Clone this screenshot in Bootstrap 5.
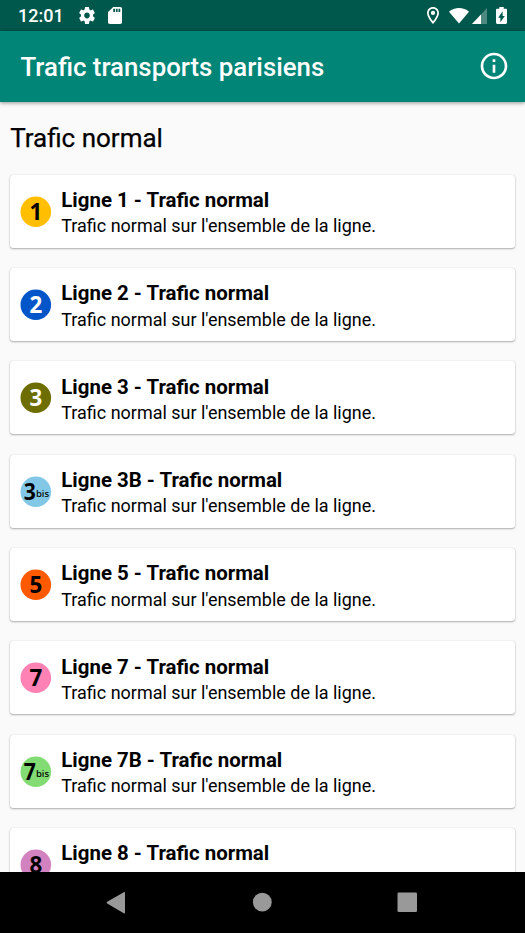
<!DOCTYPE html>
<html lang="fr">
<head>
<meta charset="utf-8">
<meta name="viewport" content="width=device-width, initial-scale=1">
<title>Trafic transports parisiens</title>
<link href="https://cdn.jsdelivr.net/npm/bootstrap@5.3.0/dist/css/bootstrap.min.css" rel="stylesheet">
<style>
body { font-family: Roboto, sans-serif; background: #fafafa; color: #000; }
.screen { height: 933px; }
.status-bar { height: 30.5px; background: #00574b; font-size: 18px; font-weight: 500; color: #fff; padding: 1px 18px 0; }
.status-bar svg, .app-bar svg, .nav-keys svg { display: block; flex: none; }
.clock { width: 60.5px; }
.gear { margin-right: 13px; }
.wifi { margin-left: 10px; }
.signal { margin-left: 3px; }
.battery { margin-left: 9px; }
.app-bar { height: 71.5px; background: #008577; box-shadow: 0 1px 4px rgba(0,0,0,.42); padding: 0 15px 0 20.5px; z-index: 1; }
.app-title { font-size: 25.8px; font-weight: 500; line-height: 30px; color: #fff; padding-top: 1.5px; }
.content { padding: 0 10px; }
.section-title { font-size: 26px; font-weight: 400; line-height: 30px; margin: 20.5px 0 22.1px .2px; -webkit-text-stroke: .25px #000; }
.lines { gap: 20.33px; }
.line-card { height: 73px; border: 0; border-radius: 3px; box-shadow: 0 1px 2px rgba(0,0,0,.3), 0 0 1px rgba(0,0,0,.2); padding: 0 10px; }
.line-text { margin-left: 10.3px; padding-top: 4px; }
.line-name { font-size: 20.45px; font-weight: 700; line-height: 26px; }
.line-info { font-size: 17.97px; line-height: 26px; padding-top: .15px; margin-bottom: -.15px; }
.line-logo { width: 31px; height: 31px; flex: none; overflow: visible; }
.line-logo text { font-family: "Noto Sans", sans-serif; font-weight: 700; text-anchor: middle; }
.line-logo .bis { font-weight: 500; }
.nav-keys { height: 61px; background: #000; }
</style>
</head>
<body>
<div class="screen d-flex flex-column overflow-hidden">
  <div class="status-bar d-flex align-items-center flex-shrink-0">
    <span class="clock">12:01</span>
    <svg class="gear" width="16" height="17" viewBox="2 2 20 20" preserveAspectRatio="none" fill="#fff"><path d="M19.43 12.98c.04-.32.07-.64.07-.98s-.03-.66-.07-.98l2.11-1.65c.19-.15.24-.42.12-.64l-2-3.46c-.12-.22-.39-.3-.61-.22l-2.49 1c-.52-.4-1.08-.73-1.69-.98l-.38-2.65C14.46 2.18 14.25 2 14 2h-4c-.25 0-.46.18-.49.42l-.38 2.65c-.61.25-1.17.59-1.69.98l-2.49-1c-.23-.09-.49 0-.61.22l-2 3.46c-.13.22-.07.49.12.64l2.11 1.65c-.04.32-.07.65-.07.98s.03.66.07.98l-2.11 1.65c-.19.15-.24.42-.12.64l2 3.46c.12.22.39.3.61.22l2.49-1c.52.4 1.08.73 1.69.98l.38 2.65c.03.24.24.42.49.42h4c.25 0 .46-.18.49-.42l.38-2.65c.61-.25 1.17-.59 1.69-.98l2.49 1c.23.09.49 0 .61-.22l2-3.46c.12-.22.07-.49-.12-.64l-2.11-1.65zM12 15.500c-1.930 0-3.500-1.570-3.500-3.500s1.570-3.500 3.500-3.500 3.500 1.570 3.500 3.500-1.570 3.500-3.500 3.500z"/></svg>
    <svg width="14" height="17" viewBox="4 2 16 20" preserveAspectRatio="none" fill="#fff"><path d="M18 2h-8L4.020 8 4 20c0 1.100.900 2 2 2h12c1.100 0 2-.900 2-2V4c0-1.100-.900-2-2-2zm-6 6h-2V4h2v4zm3 0h-2V4h2v4zm3 0h-2V4h2v4z"/></svg>
    <svg class="ms-auto" width="12" height="17" viewBox="5 2 14 20" preserveAspectRatio="none" fill="#fff"><path d="M12 2C8.130 2 5 5.130 5 9c0 5.250 7 13 7 13s7-7.750 7-13c0-3.870-3.130-7-7-7zM7 9c0-2.760 2.240-5 5-5s5 2.240 5 5c0 2.880-2.880 7.190-5 9.880C9.920 16.210 7 11.850 7 9z"/><circle cx="12" cy="9" r="2.500"/></svg>
    <svg class="wifi" width="20" height="16" viewBox="0 0 20 16" fill="#fff"><path d="M10 15.600 0 3.700C5.500-1.200 14.500-1.200 20 3.700Z"/></svg>
    <svg class="signal" width="15" height="16" viewBox="0 0 15 16" fill="#fff"><path opacity=".3" d="M15 0V16H0Z"/><path d="M9 6.400V16H0Z"/></svg>
    <svg class="battery" width="11" height="17" viewBox="7 2 10 20" preserveAspectRatio="none" fill="#fff"><path d="M15.670 4H14V2h-4v2H8.330C7.600 4 7 4.600 7 5.330v15.330C7 21.400 7.600 22 8.330 22h7.330c.740 0 1.340-.600 1.340-1.330V5.330C17 4.600 16.400 4 15.670 4zM11 20v-5.500H9L13 7v5.500h2L11 20z"/></svg>
  </div>
  <header class="app-bar d-flex align-items-center justify-content-between flex-shrink-0 position-relative">
    <h1 class="app-title m-0">Trafic transports parisiens</h1>
    <svg width="32" height="32" viewBox="0 0 24 24" fill="#fff" role="img" aria-label="Informations"><path d="M11 7h2v2h-2zm0 4h2v6h-2zm1-9C6.480 2 2 6.480 2 12s4.480 10 10 10 10-4.480 10-10S17.520 2 12 2zm0 18c-4.410 0-8-3.590-8-8s3.590-8 8-8 8 3.590 8 8-3.590 8-8 8z"/></svg>
  </header>
  <main class="content flex-grow-1 overflow-hidden">
    <h2 class="section-title">Trafic normal</h2>
    <div class="lines d-flex flex-column" id="lines"></div>
  </main>
  <nav class="nav-keys d-flex flex-shrink-0 align-items-center">
    <svg class="w-100 h-100" viewBox="0 0 525 61" fill="#999"><path d="M107.200 29.800 123.800 20.200Q125 19.500 125 21V40.500Q125 42 123.800 41.200L107.200 31.400Q106 30.600 107.200 29.800Z"/><circle cx="262.300" cy="30.200" r="9.400"/><rect x="397.500" y="20.500" width="19.500" height="19.500" rx="1.300"/></svg>
  </nav>
</div>
<script src="https://cdn.jsdelivr.net/npm/bootstrap@5.3.0/dist/js/bootstrap.bundle.min.js"></script>
<script>
const lines = [
  ["1", "#ffbe00", "#000"], ["2", "#0055c8", "#fff"], ["3", "#6e6e00", "#fff"],
  ["3B", "#82c8e6", "#000"], ["5", "#ff5a00", "#000"], ["7", "#ff82b4", "#000"],
  ["7B", "#82dc73", "#000"], ["8", "#d282be", "#000"]
];
document.getElementById("lines").innerHTML = lines.map(([name, fill, ink]) => {
  const bis = name.endsWith("B");
  const digit = name[0];
  const label = bis
    ? `<text transform="translate(9.700 23.500) scale(.92 1)" font-size="23">${digit}</text><text class="bis" x="22.500" y="20.500" font-size="9.600">bis</text>`
    : `<text transform="translate(15.800 24.400) scale(.95 1)" font-size="23.500">${digit}</text>`;
  return `<article class="line-card card flex-row align-items-center flex-shrink-0">
    <svg class="line-logo" viewBox="0 0 31 31" fill="${ink}"><circle cx="15.800" cy="15.700" r="15.300" fill="${fill}"/>${label}</svg>
    <div class="line-text"><div class="line-name">Ligne ${name} - Trafic normal</div><div class="line-info">Trafic normal sur l'ensemble de la ligne.</div></div>
  </article>`;
}).join("");
</script>
</body>
</html>
